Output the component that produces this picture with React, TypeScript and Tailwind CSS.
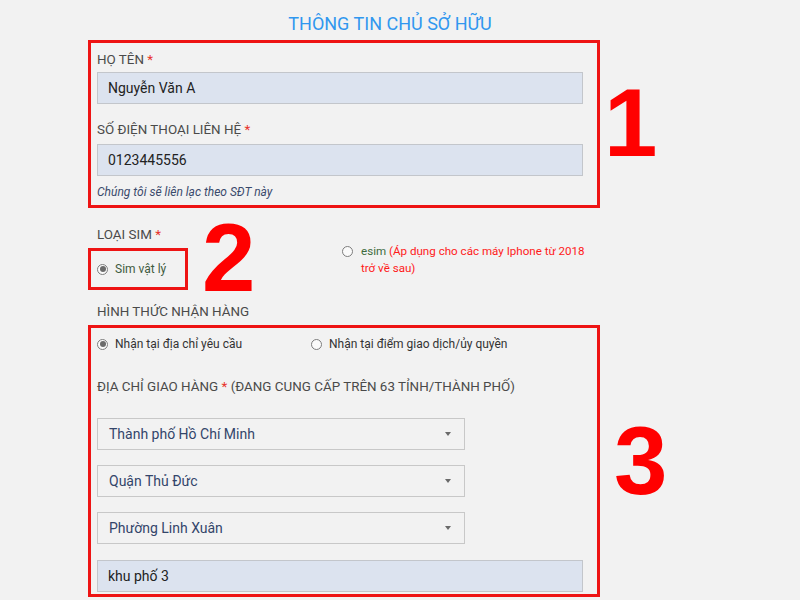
import React from 'react';

const Radio: React.FC<{ checked?: boolean }> = ({ checked }) => (
  <span className="flex items-center justify-center w-[11px] h-[11px] rounded-full border border-[#7d7d7d] bg-[#fafafa] shrink-0">
    {checked && <span className="w-[6px] h-[6px] rounded-full bg-[#6b6b6b]" />}
  </span>
);

const Label: React.FC<{ text: string; required?: boolean; extra?: string; className?: string }> = ({
  text,
  required,
  extra,
  className = '',
}) => (
  <div className={`text-[13.4px] leading-[20px] text-[#4a4a4a] uppercase ${className}`}>
    {text}
    {required && <span className="text-[#e8332c]"> *</span>}
    {extra && <span> {extra}</span>}
  </div>
);

const TextInput: React.FC<{ value: string; className?: string }> = ({ value, className = '' }) => (
  <div
    className={`w-[486px] h-[32px] flex items-center pl-[10px] bg-[#dce3ef] border border-[#c3c6cb] text-[14px] text-[#222] ${className}`}
  >
    {value}
  </div>
);

const Select: React.FC<{ value: string; className?: string }> = ({ value, className = '' }) => (
  <div
    className={`w-[368px] h-[32px] flex items-center justify-between pl-[11px] pr-[13px] bg-[#f2f2f2] border border-[#c8c8c8] text-[14px] text-[#33456a] ${className}`}
  >
    <span>{value}</span>
    <span className="w-0 h-0 border-l-[3px] border-r-[3px] border-t-[4px] border-l-transparent border-r-transparent border-t-[#6a6a6a]" />
  </div>
);

const Marker: React.FC<{ n: string; className?: string }> = ({ n, className = '' }) => (
  <span className={`font-['Liberation_Sans',Arial,sans-serif] font-bold text-[96px] leading-[72px] text-[#ff0000] ${className}`}>
    {n}
  </span>
);

export default function App() {
  return (
    <div className="relative w-[800px] h-[600px] overflow-hidden bg-[#f2f2f2] font-['Roboto','Noto_Sans',sans-serif]">
      <div className="ml-[88px] w-[604px] pt-3 mb-1 text-center text-[18px] leading-[24px] text-[#3097ef]">
        THÔNG TIN CHỦ SỞ HỮU
      </div>

      <div className="ml-[88px] flex flex-col">
        {/* 1 */}
        <div className="flex items-center">
          <div className="w-[512px] border-[3px] border-[#ee1414] pl-[6px] pt-[7px] pb-[5px]">
            <Label text="Họ tên" required className="mb-[2px]" />
            <TextInput value="Nguyễn Văn A" />
            <Label text="Số điện thoại liên hệ" required className="mt-[16px] mb-[4px]" />
            <TextInput value="0123445556" />
            <div className="mt-[8px] text-[12px] leading-[16px] italic text-[#3a4a6c]">
              Chúng tôi sẽ liên lạc theo SĐT này
            </div>
          </div>
          <Marker n="1" className="ml-[4px] -translate-y-[1px]" />
        </div>

        {/* 2 */}
        <Label text="Loại sim" required className="mt-[17px] pl-[9px]" />
        <div className="mt-[3px] flex items-start">
          <div className="w-[100px] h-[42px] border-[3px] border-[#ee1414] pl-[6px] flex items-center gap-[7px]">
            <Radio checked />
            <span className="text-[12px] text-[#3e5b3e]">Sim vật lý</span>
          </div>
          <div className="ml-[154px] -mt-[5px] flex items-start gap-[8px]">
            <span className="mt-[3px]">
              <Radio />
            </span>
            <p className="w-[228px] text-[11.6px] leading-[17px] text-[#ff1a1a]">
              <span className="text-[#3e6b3e]">esim</span> (Áp dụng cho các máy Iphone từ 2018 trở về sau)
            </p>
          </div>
        </div>

        <Label text="Hình thức nhận hàng" className="mt-[12px] pl-[9px]" />

        {/* 3 */}
        <div className="mt-[3px] flex items-center">
          <div className="w-[512px] border-[3px] border-[#ee1414] pl-[6px] pt-[8px] pb-[2px]">
            <div className="flex items-center h-[16px] text-[12px] text-[#333]">
              <div className="w-[214px] flex items-center gap-[7px]">
                <Radio checked />
                <span>Nhận tại địa chỉ yêu cầu</span>
              </div>
              <div className="flex items-center gap-[7px]">
                <Radio />
                <span>Nhận tại điểm giao dịch/ủy quyền</span>
              </div>
            </div>
            <Label
              text="Địa chỉ giao hàng"
              required
              extra="(Đang cung cấp trên 63 tỉnh/thành phố)"
              className="mt-[25px]"
            />
            <Select value="Thành phố Hồ Chí Minh" className="mt-[21px]" />
            <Select value="Quận Thủ Đức" className="mt-[15px]" />
            <Select value="Phường Linh Xuân" className="mt-[15px]" />
            <TextInput value="khu phố 3" className="mt-[16px]" />
          </div>
          <Marker n="3" className="ml-[14px]" />
        </div>
      </div>

      <Marker n="2" className="absolute left-[202px] top-[222px]" />
    </div>
  );
}
